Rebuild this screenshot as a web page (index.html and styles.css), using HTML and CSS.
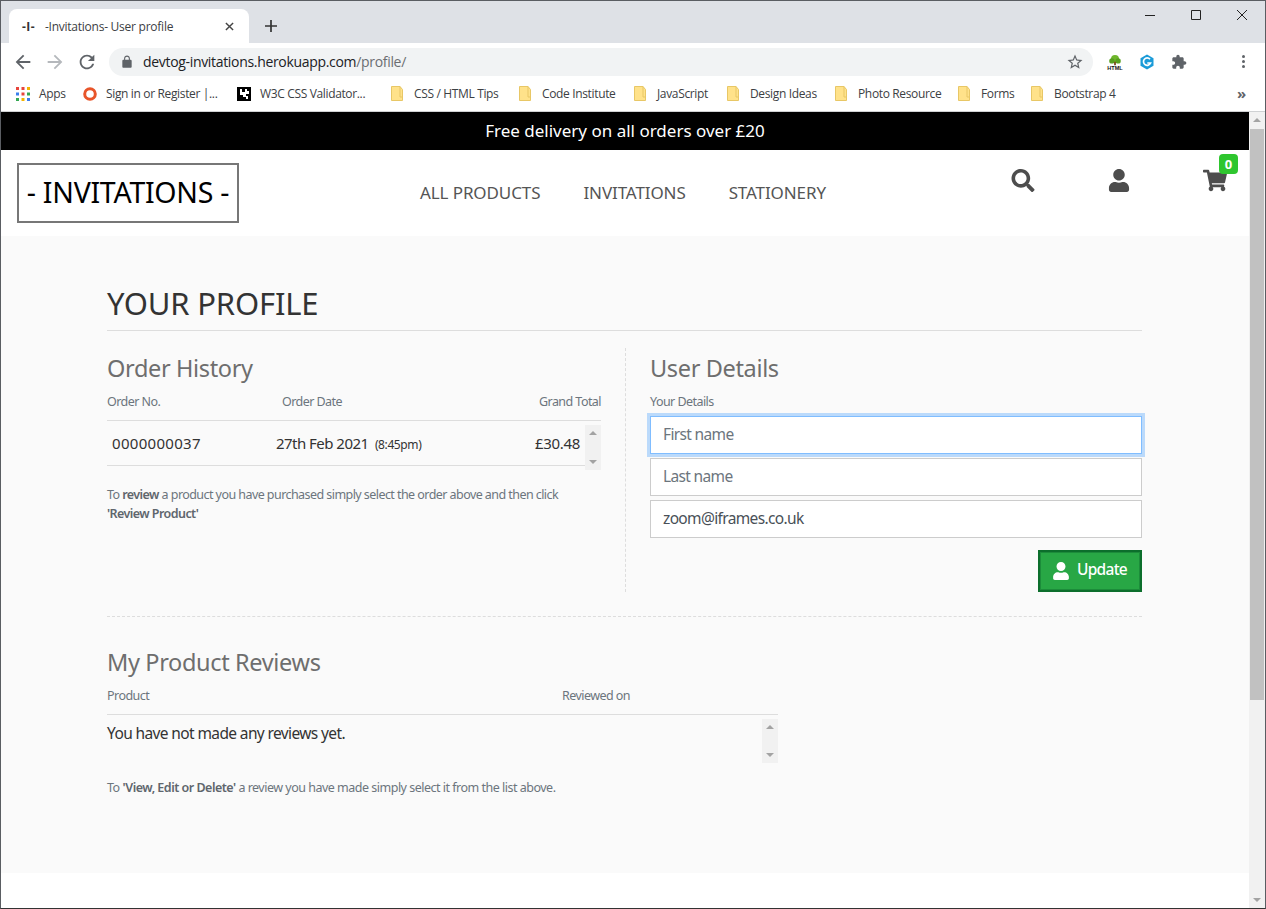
FILE: index.html
```html
<!DOCTYPE html>
<html lang="en">
<head>
<meta charset="utf-8">
<title>-Invitations- User profile</title>
<link rel="stylesheet" href="styles.css">
</head>
<body>
<svg class="defs" width="0" height="0" aria-hidden="true">
  <symbol id="folder" viewBox="0 0 12 15"><path d="M.5.5h8.5l2.5 3v11H.5z" fill="#ffe28a" stroke="#e8c766"/><path d="M9 .5v10.5h2.5" fill="none" stroke="#e8c766"/></symbol>
  <symbol id="fa-user" viewBox="0 0 448 512"><path d="M224 256c70.7 0 128-57.3 128-128S294.7 0 224 0 96 57.3 96 128s57.3 128 128 128zm89.6 32h-16.7c-22.2 10.2-46.9 16-72.9 16s-50.6-5.8-72.9-16h-16.7C60.2 288 0 348.2 0 422.4V464c0 26.5 21.5 48 48 48h352c26.5 0 48-21.5 48-48v-41.6c0-74.2-60.2-134.4-134.4-134.4z"/></symbol>
</svg>
<div class="window">
  <div class="tabstrip">
    <div class="tab">
      <span class="tab-icon">-I-</span>
      <span class="tab-title">-Invitations- User profile</span>
      <svg class="tab-close" viewBox="0 0 10 10"><path d="M1 1l8 8M9 1L1 9"/></svg>
    </div>
    <svg class="new-tab" viewBox="0 0 12 12"><path d="M6 0v12M0 6h12"/></svg>
    <div class="win-controls">
      <svg class="win-btn" viewBox="0 0 12 12"><path d="M1 6.5h10"/></svg>
      <svg class="win-btn" viewBox="0 0 12 12"><path d="M1.5 1.5h9v9h-9z"/></svg>
      <svg class="win-btn" viewBox="0 0 12 12"><path d="M1 1l10 10M11 1L1 11"/></svg>
    </div>
  </div>

  <div class="toolbar">
    <svg class="tool-icon" viewBox="0 0 24 24"><path d="M20 11H7.83l5.59-5.59L12 4l-8 8 8 8 1.41-1.41L7.83 13H20v-2z"/></svg>
    <svg class="tool-icon tool-off" viewBox="0 0 24 24"><path d="M4 11h12.17l-5.59-5.59L12 4l8 8-8 8-1.41-1.41L16.17 13H4v-2z"/></svg>
    <svg class="tool-icon" viewBox="0 0 24 24"><path d="M17.65 6.35C16.2 4.9 14.21 4 12 4c-4.42 0-7.99 3.58-7.99 8s3.57 8 7.99 8c3.73 0 6.84-2.55 7.73-6h-2.08c-.82 2.33-3.04 4-5.65 4-3.31 0-6-2.69-6-6s2.69-6 6-6c1.66 0 3.14.69 4.22 1.78L13 11h7V4l-2.35 2.35z"/></svg>
    <div class="omnibox">
      <svg class="lock" viewBox="0 0 24 24"><path d="M18 8h-1V6c0-2.76-2.24-5-5-5S7 3.24 7 6v2H6c-1.1 0-2 .9-2 2v10c0 1.1.9 2 2 2h12c1.1 0 2-.9 2-2V10c0-1.1-.9-2-2-2zM12 3.1c1.71 0 3.1 1.39 3.1 3.1V8H8.9V6.2c0-1.71 1.39-3.1 3.1-3.1z"/></svg>
      <span class="url">devtog-invitations.herokuapp.com<span class="url-path">/profile/</span></span>
      <svg class="star" viewBox="0 0 24 24"><path d="M22 9.24l-7.19-.62L12 2 9.19 8.63 2 9.24l5.46 4.73L5.82 21 12 17.27 18.18 21l-1.63-7.03L22 9.24zM12 15.4l-3.76 2.27 1-4.28-3.32-2.88 4.38-.38L12 6.1l1.71 4.04 4.38.38-3.32 2.88 1 4.28L12 15.4z"/></svg>
    </div>
    <div class="extensions">
      <span class="ext ext-tree">
        <svg viewBox="0 0 18 12"><circle cx="9" cy="5" r="4.5" fill="#6fb62c"/><circle cx="5.5" cy="7" r="3" fill="#58a020"/><circle cx="12.5" cy="7" r="3" fill="#58a020"/><path d="M8 8h2v4H8z" fill="#7a4a1c"/></svg>
        <span class="ext-tree-label">HTML</span>
      </span>
      <svg class="ext" viewBox="0 0 16 16"><path d="M8 .5l6.5 3.7v7.6L8 15.5l-6.5-3.7V4.2z" fill="#1b9bd8"/><path d="M11 5.2A3.7 3.7 0 1 0 11.6 9H8.3" fill="none" stroke="#fff" stroke-width="1.7"/></svg>
      <svg class="ext ext-puzzle" viewBox="0 0 24 24"><path d="M20.5 11H19V7c0-1.1-.9-2-2-2h-4V3.5C13 2.12 11.88 1 10.5 1S8 2.12 8 3.5V5H4c-1.1 0-1.99.9-1.99 2v3.8H3.5c1.49 0 2.7 1.21 2.7 2.7s-1.21 2.7-2.7 2.7H2V20c0 1.1.9 2 2 2h3.8v-1.5c0-1.49 1.21-2.7 2.7-2.7 1.49 0 2.7 1.21 2.7 2.7V22H17c1.1 0 2-.9 2-2v-4h1.5c1.38 0 2.5-1.12 2.5-2.5S21.88 11 20.5 11z"/></svg>
    </div>
    <span class="kebab"><i></i><i></i><i></i></span>
  </div>

  <div class="bookmarks">
    <span class="bm bm-apps">
      <svg class="bm-icon" viewBox="0 0 14 14"><g fill="#e8453c"><path d="M0 0h3v3H0zM5.500 0h3v3h-3z"/></g><path d="M11 0h3v3h-3z" fill="#f4b400"/><path d="M0 5.500h3v3H0z" fill="#3b7fed"/><path d="M5.500 5.500h3v3h-3z" fill="#e8453c"/><path d="M11 5.500h3v3h-3z" fill="#34a853"/><path d="M0 11h3v3H0z" fill="#34a853"/><path d="M5.500 11h3v3h-3z" fill="#f4b400"/><path d="M11 11h3v3h-3z" fill="#3b7fed"/></svg>
      Apps
    </span>
    <span class="bm bm-signin">
      <svg class="bm-icon" viewBox="0 0 14 14"><circle cx="7" cy="7" r="5.300" fill="none" stroke="#e8552a" stroke-width="3"/></svg>
      Sign in or Register |...
    </span>
    <span class="bm bm-w3c">
      <svg class="bm-icon" viewBox="0 0 14 14"><path d="M0 0h14v14H0z"/><path d="M3 2h2v3h3V2h2v2h2v3H9v2h2v3H9v-2H6V8H3z" fill="#fff"/></svg>
      W3C CSS Validator...
    </span>
    <span class="bm bm-tips"><svg class="bm-folder"><use href="#folder"/></svg>CSS / HTML Tips</span>
    <span class="bm bm-ci"><svg class="bm-folder"><use href="#folder"/></svg>Code Institute</span>
    <span class="bm bm-js"><svg class="bm-folder"><use href="#folder"/></svg>JavaScript</span>
    <span class="bm bm-design"><svg class="bm-folder"><use href="#folder"/></svg>Design Ideas</span>
    <span class="bm bm-photo"><svg class="bm-folder"><use href="#folder"/></svg>Photo Resource</span>
    <span class="bm bm-forms"><svg class="bm-folder"><use href="#folder"/></svg>Forms</span>
    <span class="bm"><svg class="bm-folder"><use href="#folder"/></svg>Bootstrap 4</span>
    <span class="bm-more">»</span>
  </div>

  <div class="viewport">
    <div class="page">
      <div class="banner">Free delivery on all orders over £20</div>
      <header class="site-header">
        <a class="logo">- INVITATIONS -</a>
        <nav class="site-nav">
          <a>ALL PRODUCTS</a>
          <a>INVITATIONS</a>
          <a>STATIONERY</a>
        </nav>
        <div class="site-icons">
          <svg class="site-icon" viewBox="0 0 512 512"><path d="M505 442.7L405.3 343c-4.500-4.500-10.600-7-17-7H372c27.600-35.300 44-79.700 44-128C416 93.100 322.900 0 208 0S0 93.100 0 208s93.100 208 208 208c48.300 0 92.700-16.400 128-44v16.300c0 6.400 2.500 12.500 7 17l99.700 99.700c9.400 9.400 24.600 9.400 33.900 0l28.300-28.300c9.400-9.400 9.400-24.600.1-34zM208 336c-70.700 0-128-57.200-128-128 0-70.700 57.200-128 128-128 70.700 0 128 57.200 128 128 0 70.700-57.200 128-128 128z"/></svg>
          <svg class="site-icon"><use href="#fa-user"/></svg>
          <span class="cart">
            <svg class="site-icon" viewBox="0 0 576 512"><path d="M528.120 301.319l47.273-208C578.806 78.301 567.391 64 551.990 64H159.208l-9.166-44.810C147.758 8.021 137.930 0 126.529 0H24C10.745 0 0 10.745 0 24v16c0 13.255 10.745 24 24 24h69.883l70.248 343.435C147.325 417.100 136 435.222 136 456c0 30.928 25.072 56 56 56s56-25.072 56-56c0-15.674-6.447-29.835-16.824-40h209.647C430.447 426.165 424 440.326 424 456c0 30.928 25.072 56 56 56s56-25.072 56-56c0-22.172-12.888-41.332-31.579-50.405l5.517-24.276c3.413-15.018-8.002-29.319-23.403-29.319H218.117l-6.545-32h293.145c11.206 0 20.920-7.754 23.403-18.681z"/></svg>
            <span class="cart-badge">0</span>
          </span>
        </div>
      </header>

      <main class="profile">
        <h1 class="profile-title">YOUR PROFILE</h1>
        <div class="profile-columns">
          <section class="col-orders">
            <h2 class="section-title">Order History</h2>
            <div class="order-head">
              <span>Order No.</span>
              <span>Order Date</span>
              <span>Grand Total</span>
            </div>
            <div class="scroll-row">
              <div class="order-row">
                <span class="order-no">0000000037</span>
                <span class="order-date">27th Feb 2021 <small class="order-time">(8:45pm)</small></span>
                <span>£30.48</span>
              </div>
              <div class="minibar"><i class="arrow-up"></i><i class="arrow-down"></i></div>
            </div>
            <p class="note note-orders">To <b>review</b> a product you have purchased simply select the order above and then click <b>'Review Product'</b></p>
          </section>
          <section class="col-user">
            <h2 class="section-title">User Details</h2>
            <div class="user-label">Your Details</div>
            <div class="field field-focus field-ph">First name</div>
            <div class="field field-ph">Last name</div>
            <div class="field">zoom@iframes.co.uk</div>
            <div class="user-actions">
              <button class="update-btn" type="button"><svg class="update-icon"><use href="#fa-user"/></svg><span class="update-label">Update</span></button>
            </div>
          </section>
        </div>
        <div class="reviews">
          <h2 class="section-title">My Product Reviews</h2>
          <div class="reviews-box">
            <div class="review-head"><span>Product</span><span>Reviewed on</span></div>
            <div class="scroll-row">
              <div class="review-body">You have not made any reviews yet.</div>
              <div class="minibar minibar-tall"><i class="arrow-up"></i><i class="arrow-down"></i></div>
            </div>
          </div>
          <p class="note note-reviews">To <b>'View, Edit or Delete'</b> a review you have made simply select it from the list above.</p>
        </div>
      </main>
      <div class="page-foot"></div>
    </div>
    <div class="scrollbar">
      <i class="sb-up"></i>
      <div class="sb-thumb"></div>
      <i class="sb-down"></i>
    </div>
  </div>
</div>
</body>
</html>
```
FILE: styles.css
```css
* { box-sizing: border-box; }
html, body { margin: 0; padding: 0; background: #fff; }
body { font-family: "Noto Sans", "Liberation Sans", sans-serif; color: #333; overflow: hidden; }
.defs { position: absolute; }
.window { width: 1266px; height: 909px; border: 1px solid #5a5d62; border-bottom-color: #333; display: flex; flex-direction: column; overflow: hidden; }

/* browser chrome */
.tabstrip { height: 42px; flex: none; background: #dee1e6; display: flex; align-items: flex-start; }
.tab { width: 240px; height: 34px; margin: 8px 0 0 8px; padding-left: 13px; background: #fff; border-radius: 8px 8px 0 0; display: flex; align-items: center; font-family: "Open Sans", sans-serif; font-size: 12px; color: #3c4043; }
.tab-icon { width: 23px; font-weight: 700; font-size: 12px; letter-spacing: .5px; color: #333; }
.tab-title { width: 180px; letter-spacing: -.25px; white-space: nowrap; }
.tab-close { width: 9px; height: 9px; margin-left: 0; fill: none; stroke: #444; stroke-width: 1.6; }
.new-tab { width: 12px; height: 12px; margin: 19px 0 0 16px; fill: none; stroke: #333; stroke-width: 1.7; }
.win-controls { margin-left: auto; margin-right: 17px; margin-top: 8px; display: flex; gap: 34px; }
.win-btn { width: 12px; height: 12px; fill: none; stroke: #222; stroke-width: 1; }

.toolbar { height: 37px; flex: none; background: #fff; display: flex; align-items: center; padding-left: 11px; }
.tool-icon { width: 22px; height: 22px; margin-right: 10px; fill: #5f6368; }
.tool-off { fill: #b5b8bc; }
.omnibox { width: 984px; height: 28px; margin-left: 1px; background: #f1f3f4; border-radius: 14px; display: flex; align-items: center; padding-left: 11px; padding-right: 9px; }
.lock { width: 14px; height: 14px; fill: #5f6368; }
.url { margin-left: 9px; font-family: "Open Sans", sans-serif; font-size: 14px; letter-spacing: -.32px; color: #202124; }
.url-path { color: #6b6e72; }
.star { margin-left: auto; width: 18px; height: 18px; fill: #5f6368; }
.extensions { display: flex; align-items: center; gap: 16px; margin-left: 14px; }
.ext { width: 16px; height: 16px; display: block; }
.ext-tree { position: relative; }
.ext-tree svg { display: block; width: 16px; height: 12px; }
.ext-tree-label { display: block; font: 700 5.500px/5px "Liberation Sans", sans-serif; text-align: center; color: #111; }
.ext-puzzle { fill: #5f6368; }
.kebab { margin-left: 55px; display: flex; flex-direction: column; gap: 2px; }
.kebab i { width: 3px; height: 3px; border-radius: 50%; background: #5f6368; }

.bookmarks { height: 32px; flex: none; background: #fff; border-bottom: 1px solid #cfd1d3; display: flex; align-items: center; padding: 0 0 4px 15px; font-family: "Open Sans", sans-serif; font-size: 12px; letter-spacing: -.35px; color: #3c4043; white-space: nowrap; }
.bm { display: flex; align-items: center; }
.bm-icon { width: 14px; height: 14px; margin-right: 9px; }
.bm-folder { width: 12px; height: 15px; margin-right: 11px; }
.bm-apps { width: 67px; }
.bm-signin { width: 154px; }
.bm-w3c { width: 154px; }
.bm-tips { width: 128px; }
.bm-ci { width: 115px; }
.bm-js { width: 93px; }
.bm-design { width: 108px; }
.bm-photo { width: 123px; }
.bm-forms { width: 73px; }
.bm-more { margin-left: auto; margin-right: 19px; margin-bottom: 2px; font-size: 15px; font-weight: 700; color: #5f6368; line-height: 14px; }

/* page */
.viewport { flex: 1; min-height: 0; display: flex; }
.page { flex: 1; min-width: 0; display: flex; flex-direction: column; background: #fff; }
.banner { height: 38px; background: #000; color: #fff; text-align: center; font-size: 17px; line-height: 38px; }
.site-header { height: 86px; flex: none; background: #fff; display: flex; align-items: flex-start; }
.logo { width: 222px; height: 60px; margin: 13px 0 0 16px; border: 2px solid #777; color: #000; font-size: 28.500px; line-height: 54px; text-align: center; letter-spacing: -.27px; white-space: nowrap; }
.site-nav { margin: 31px 0 0 181px; display: flex; gap: 43px; font-size: 17px; line-height: 24px; color: #555; letter-spacing: -.1px; white-space: nowrap; }
.site-icons { margin: 19px 22px 0 auto; display: flex; gap: 72px; }
.site-icon { display: block; width: 24px; height: 23px; fill: #4d4d4d; }
.cart { position: relative; display: block; }
.cart-badge { position: absolute; left: 16px; top: -15px; width: 19px; height: 20px; border-radius: 4px; background: #2fc62f; color: #fff; font-size: 13px; font-weight: 700; line-height: 20px; text-align: center; }

.profile { height: 637px; flex: none; background: #fafafa; padding: 48px 0 0 106px; }
.profile-title { width: 1035px; height: 47px; margin: 0; font-size: 31px; font-weight: 400; line-height: 38px; letter-spacing: -.17px; color: #333; border-bottom: 1px solid #ddd; }
.profile-columns { width: 1035px; margin-top: 17px; display: grid; grid-template-columns: 519px 516px; height: 244px; }
.col-orders { padding-right: 24px; border-right: 1px dashed #ddd; }
.col-user { padding-left: 24px; }
.section-title { margin: 0; font-size: 23.500px; line-height: 40px; font-weight: 400; letter-spacing: -.35px; color: #6e6e6e; }
.order-head { margin-top: 4px; padding-bottom: 8px; height: 29px; display: grid; grid-template-columns: 175px 1fr auto; font-size: 12.500px; line-height: 20px; letter-spacing: -.55px; color: #6c757d; border-bottom: 1px solid #ddd; }
.scroll-row { display: flex; align-items: flex-start; }
.order-row { width: 478px; flex: none; height: 45px; padding: 0 5px; display: grid; grid-template-columns: 164px 1fr auto; align-items: center; font-size: 15px; letter-spacing: -.3px; color: #333; border-bottom: 1px solid #ddd; }
.order-no { letter-spacing: .3px; }
.order-date { letter-spacing: -.53px; }
.order-time { font-size: 12px; margin-left: 3px; letter-spacing: -.4px; }
.minibar { width: 16px; flex: none; height: 45px; margin-top: 4px; background: #f1f1f1; display: flex; flex-direction: column; justify-content: space-between; align-items: center; padding: 6px 0; }
.minibar-tall { height: 44px; }
.arrow-up, .sb-up { width: 0; height: 0; border: 4px solid transparent; border-top: 0; border-bottom: 4px solid #a3a3a3; }
.arrow-down, .sb-down { width: 0; height: 0; border: 4px solid transparent; border-bottom: 0; border-top: 4px solid #a3a3a3; }
.note { margin: 0; font-size: 12.500px; line-height: 19px; letter-spacing: -.56px; color: #6c757d; }
.note b { font-weight: 600; color: #5f666d; }
.note-orders { margin-top: 15px; }

.user-label { margin-top: 4px; height: 24px; font-size: 12.500px; line-height: 20px; letter-spacing: -.55px; color: #6c757d; }
.field { height: 38px; margin-bottom: 4px; padding-left: 12px; background: #fff; border: 1px solid #ccc; font-size: 15.500px; line-height: 35px; letter-spacing: -.65px; color: #495057; }
.field-ph { color: #6c757d; }
.field-focus { border-color: #80bdff; box-shadow: 0 0 0 3px rgba(0, 123, 255, .25); }
.user-actions { display: flex; justify-content: flex-end; margin-top: 12px; }
.update-btn { width: 104px; height: 42px; padding: 0; background: #28a745; border: 2px solid #0c6e2c; box-shadow: inset 0 0 0 1px #1c8c3a; color: #fff; font: 500 15.500px "Noto Sans", sans-serif; letter-spacing: -.7px; display: flex; align-items: center; justify-content: center; gap: 8px; }
.update-label { margin-bottom: 4px; }
.update-icon { width: 16px; height: 18px; fill: #fff; }

.reviews { width: 1035px; margin-top: 24px; border-top: 1px dashed #ddd; padding-top: 25px; }
.reviews-box { width: 671px; }
.review-head { margin-top: 4px; padding-bottom: 8px; height: 29px; display: grid; grid-template-columns: 455px 1fr; font-size: 12.500px; line-height: 20px; letter-spacing: -.55px; color: #6c757d; border-bottom: 1px solid #ddd; }
.review-body { width: 655px; flex: none; padding-top: 7px; font-size: 15.500px; line-height: 22px; letter-spacing: -.62px; color: #333; }
.note-reviews { margin-top: 15px; letter-spacing: -.5px; }
.page-foot { flex: 1; background: #fff; }

.scrollbar { width: 16px; flex: none; background: #f1f1f1; display: flex; flex-direction: column; align-items: center; position: relative; }
.sb-up { margin-top: 6px; }
.sb-thumb { width: 14px; height: 571px; margin-top: 7px; background: #c1c1c1; }
.sb-down { margin-top: auto; margin-bottom: 6px; }
```
